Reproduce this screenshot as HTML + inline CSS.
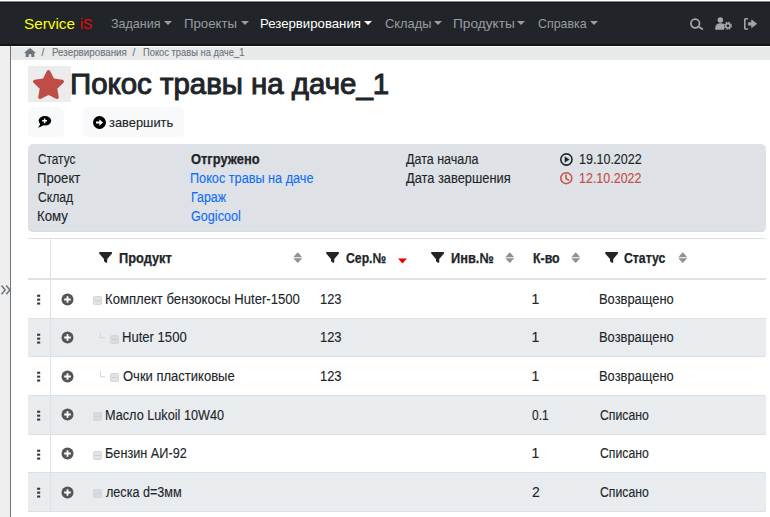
<!DOCTYPE html>
<html><head><meta charset="utf-8">
<style>
*{box-sizing:border-box;margin:0;padding:0}
html,body{width:770px;height:517px;overflow:hidden;background:#fff;font-family:"Liberation Sans",sans-serif;color:#212529;position:relative}
.a{position:absolute;white-space:nowrap;transform-origin:0 0}
.caret{position:absolute;width:0;height:0;border-left:4px solid transparent;border-right:4px solid transparent;border-top:4px solid #9a9c9f}
.hline{position:absolute;left:28px;width:738px;background:#dee2e6}
.stripe{position:absolute;left:28px;width:738px;height:38.6px;background:#e9ecef}
</style></head><body>
<div class="a" style="left:0;top:0;width:770px;height:1px;background:#fff"></div>
<div class="a" style="left:0;top:1px;width:770px;height:1px;background:#8a8c8e"></div>
<div class="a" style="left:0;top:2px;width:770px;height:1px;background:#15181b"></div>
<div class="a" style="left:0;top:3px;width:770px;height:40.5px;background:#212529"></div>
<div class="a" style="left:0;top:43.5px;width:770px;height:2px;background:#121416"></div>
<i class="caret" style="left:164px;top:21px;border-top-color:#9a9c9f"></i>
<i class="caret" style="left:241px;top:21px;border-top-color:#9a9c9f"></i>
<i class="caret" style="left:364px;top:21px;border-top-color:#fff"></i>
<i class="caret" style="left:434px;top:21px;border-top-color:#9a9c9f"></i>
<i class="caret" style="left:517px;top:21px;border-top-color:#9a9c9f"></i>
<i class="caret" style="left:590px;top:21px;border-top-color:#9a9c9f"></i>
<svg class="a" style="left:689px;top:17px" width="16" height="14" viewBox="0 0 16 14"><circle cx="6.2" cy="6.5" r="4.3" fill="none" stroke="#a4a6a8" stroke-width="1.75"/><path d="M9.5 9.8 L13.3 12" stroke="#a4a6a8" stroke-width="1.8" stroke-linecap="round"/></svg>
<svg class="a" style="left:715px;top:17px" width="18" height="14" viewBox="0 0 18 14"><circle cx="5.3" cy="3" r="2.75" fill="#a4a6a8"/><path d="M0.2 12.7 V11.5 C0.2 8.3 1.8 6.2 4.8 6.2 H6 C7.6 6.2 8.6 6.8 9.1 7.6 V12.7 Z" fill="#a4a6a8"/><circle cx="12.9" cy="8.8" r="3.4" fill="none" stroke="#a4a6a8" stroke-width="1.3" stroke-dasharray="1.6 1.07"/><circle cx="12.9" cy="8.8" r="2.2" fill="none" stroke="#a4a6a8" stroke-width="1.6"/></svg>
<svg class="a" style="left:743px;top:17px" width="15" height="14" viewBox="0 0 15 14"><path d="M4.9 1.8 H2.6 Q1.8 1.8 1.8 2.6 V11.2 Q1.8 12 2.6 12 H4.9" fill="none" stroke="#a4a6a8" stroke-width="1.6"/><path d="M5.4 5.4 H8.6 V2.8 L13.8 6.8 L8.6 10.8 V8.2 H5.4 Z" fill="#a4a6a8" stroke="#a4a6a8" stroke-width="0.6" stroke-linejoin="round"/></svg>
<div class="a" style="left:0;top:45.5px;width:10px;height:472px;background:#efefef"></div>
<div class="a" style="left:10px;top:45.5px;width:1px;height:472px;background:#6c757d"></div>
<svg class="a" style="left:0px;top:285px" width="11" height="10" viewBox="0 0 11 10"><path d="M1.5 0.6 L5.2 4.95 L1.5 9.3 M6.2 0.6 L9.9 4.95 L6.2 9.3" fill="none" stroke="#6c757d" stroke-width="1.5"/></svg>
<div class="a" style="left:11px;top:45.5px;width:759px;height:1.5px;background:#fff"></div>
<div class="a" style="left:11px;top:47px;width:759px;height:12.5px;background:#e8e9e9"></div>
<svg class="a" style="left:24px;top:48px" width="12" height="9" viewBox="0 0 12 9"><path d="M6 0 L12 5 H10.3 V9 H7.3 V6.2 H4.7 V9 H1.7 V5 H0 Z" fill="#6c757d"/></svg>
<div class="a" style="left:28px;top:66px;width:42.5px;height:36.3px;background:#ececec"></div>
<svg class="a" style="left:33.3px;top:69.8px" width="31" height="29" viewBox="20 0 536 512" preserveAspectRatio="none"><path d="M259.3 17.8L194 150.2 47.9 171.5c-26.2 3.8-36.7 36.1-17.7 54.6l105.7 103-25 145.5c-4.5 26.3 23.2 46 46.4 33.7L288 439.6l130.7 68.7c23.2 12.2 50.9-7.4 46.4-33.7l-25-145.5 105.7-103c19-18.5 8.5-50.8-17.7-54.6L382 150.2 316.7 17.8c-11.7-23.6-45.6-23.9-57.4 0z" fill="#c04c48"/></svg>
<div class="a" style="left:27.7px;top:106.8px;width:36.3px;height:30.3px;background:#f8f9fa;border-radius:5px"></div>
<svg class="a" style="left:37px;top:115px" width="15" height="13" viewBox="0 0 15 13"><ellipse cx="7.9" cy="5.8" rx="6.3" ry="4.75" fill="#000"/><path d="M3.2 8.5 C3 10 2.2 11.5 0.6 12.5 C3 12.3 4.8 11.3 6.2 10.2 Z" fill="#000"/><path d="M7.6 3.4 V8.2 M5.2 5.8 H10" stroke="#fff" stroke-width="1.5"/></svg>
<div class="a" style="left:83px;top:106.8px;width:101px;height:30.3px;background:#f8f9fa;border-radius:5px"></div>
<svg class="a" style="left:93px;top:116px" width="13" height="13" viewBox="0 0 13 13"><circle cx="6.5" cy="6.5" r="6.5" fill="#000"/><path d="M3 5.6 H6.3 V3.3 L10 6.5 L6.3 9.7 V7.4 H3 Z" fill="#fff"/></svg>
<div class="a" style="left:27.8px;top:143.6px;width:738px;height:88px;background:#dee2e6;border-radius:5px;box-shadow:inset 0 -1.5px 0 #d9dde1"></div>
<svg class="a" style="left:559px;top:152px" width="15" height="15" viewBox="0 0 15 15"><circle cx="7.4" cy="7.5" r="5.6" fill="none" stroke="#212529" stroke-width="1.6"/><path d="M5.9 4.7 L10.3 7.5 L5.9 10.3 Z" fill="#212529" stroke="#212529" stroke-width="0.4" stroke-linejoin="round"/></svg>
<svg class="a" style="left:559px;top:171px" width="15" height="15" viewBox="0 0 15 15"><circle cx="7.3" cy="7.2" r="5.5" fill="none" stroke="#c8504b" stroke-width="1.5"/><path d="M7 3.9 V7.5 L9.5 9.2" fill="none" stroke="#c8504b" stroke-width="1.5" stroke-linecap="round"/></svg>
<div class="hline" style="top:238px;height:1px"></div>
<div class="hline" style="top:233.5px;height:1px;background:#fafbfb"></div>
<div class="stripe" style="top:318.00px"></div>
<div class="stripe" style="top:395.20px"></div>
<div class="stripe" style="top:472.40px"></div>
<div class="hline" style="top:277.6px;height:2px"></div>
<div class="hline" style="top:317.80px;height:1px;background:#dde1e5"></div>
<div class="hline" style="top:356.40px;height:1px;background:#dde1e5"></div>
<div class="hline" style="top:395.00px;height:1px;background:#dde1e5"></div>
<div class="hline" style="top:433.60px;height:1px;background:#dde1e5"></div>
<div class="hline" style="top:472.20px;height:1px;background:#dde1e5"></div>
<div class="hline" style="top:510.80px;height:1px;background:#dde1e5"></div>
<div class="a" style="left:50px;top:239px;width:1px;height:272px;background:#dee2e6"></div>
<svg class="a" style="left:99.2px;top:251.8px" width="13.2" height="10.8" viewBox="0 32 512 448" preserveAspectRatio="none"><path d="M3.9 54.9C10.5 40.9 24.5 32 40 32H472c15.5 0 29.5 8.9 36.1 22.9s4.6 30.5-5.2 42.5L320 320.9V448c0 12.1-6.8 23.2-17.7 28.6s-23.8 4.3-33.5-3L205 423.7c-8.1-6-12.8-15.5-12.8-25.6V320.9L9 97.3C-.7 85.4-2.8 68.8 3.9 54.9z" fill="#212529"/></svg>
<svg class="a" style="left:326.2px;top:251.8px" width="13.2" height="10.8" viewBox="0 32 512 448" preserveAspectRatio="none"><path d="M3.9 54.9C10.5 40.9 24.5 32 40 32H472c15.5 0 29.5 8.9 36.1 22.9s4.6 30.5-5.2 42.5L320 320.9V448c0 12.1-6.8 23.2-17.7 28.6s-23.8 4.3-33.5-3L205 423.7c-8.1-6-12.8-15.5-12.8-25.6V320.9L9 97.3C-.7 85.4-2.8 68.8 3.9 54.9z" fill="#212529"/></svg>
<svg class="a" style="left:431.2px;top:251.8px" width="13.2" height="10.8" viewBox="0 32 512 448" preserveAspectRatio="none"><path d="M3.9 54.9C10.5 40.9 24.5 32 40 32H472c15.5 0 29.5 8.9 36.1 22.9s4.6 30.5-5.2 42.5L320 320.9V448c0 12.1-6.8 23.2-17.7 28.6s-23.8 4.3-33.5-3L205 423.7c-8.1-6-12.8-15.5-12.8-25.6V320.9L9 97.3C-.7 85.4-2.8 68.8 3.9 54.9z" fill="#212529"/></svg>
<svg class="a" style="left:605.2px;top:251.8px" width="13.2" height="10.8" viewBox="0 32 512 448" preserveAspectRatio="none"><path d="M3.9 54.9C10.5 40.9 24.5 32 40 32H472c15.5 0 29.5 8.9 36.1 22.9s4.6 30.5-5.2 42.5L320 320.9V448c0 12.1-6.8 23.2-17.7 28.6s-23.8 4.3-33.5-3L205 423.7c-8.1-6-12.8-15.5-12.8-25.6V320.9L9 97.3C-.7 85.4-2.8 68.8 3.9 54.9z" fill="#212529"/></svg>
<svg class="a" style="left:292.7px;top:252px" width="10" height="12" viewBox="0 0 10 12"><path d="M4.75 0.3 L9 4.9 Q9.2 5.3 8.8 5.3 H0.7 Q0.3 5.3 0.5 4.9 Z M4.75 11 L9 6.6 Q9.2 6.2 8.8 6.2 H0.7 Q0.3 6.2 0.5 6.6 Z" fill="#8e9093"/></svg>
<svg class="a" style="left:504.7px;top:252px" width="10" height="12" viewBox="0 0 10 12"><path d="M4.75 0.3 L9 4.9 Q9.2 5.3 8.8 5.3 H0.7 Q0.3 5.3 0.5 4.9 Z M4.75 11 L9 6.6 Q9.2 6.2 8.8 6.2 H0.7 Q0.3 6.2 0.5 6.6 Z" fill="#8e9093"/></svg>
<svg class="a" style="left:571.2px;top:252px" width="10" height="12" viewBox="0 0 10 12"><path d="M4.75 0.3 L9 4.9 Q9.2 5.3 8.8 5.3 H0.7 Q0.3 5.3 0.5 4.9 Z M4.75 11 L9 6.6 Q9.2 6.2 8.8 6.2 H0.7 Q0.3 6.2 0.5 6.6 Z" fill="#8e9093"/></svg>
<svg class="a" style="left:677.7px;top:252px" width="10" height="12" viewBox="0 0 10 12"><path d="M4.75 0.3 L9 4.9 Q9.2 5.3 8.8 5.3 H0.7 Q0.3 5.3 0.5 4.9 Z M4.75 11 L9 6.6 Q9.2 6.2 8.8 6.2 H0.7 Q0.3 6.2 0.5 6.6 Z" fill="#8e9093"/></svg>
<svg class="a" style="left:398px;top:258px" width="9" height="6" viewBox="0 0 9 6"><path d="M0 0.5 H9 L4.5 5.5 Z" fill="#e00"/></svg>
<svg class="a" style="left:37px;top:294.1px" width="4" height="11" viewBox="0 0 4 11"><rect x="0.1" y="0.7" width="3.1" height="2.1" fill="#3a3a3a"/><rect x="0.1" y="4.6" width="3.1" height="2.1" fill="#3a3a3a"/><rect x="0.1" y="8.5" width="3.1" height="2.1" fill="#3a3a3a"/></svg>
<svg class="a" style="left:61px;top:292.6px" width="13" height="13" viewBox="0 0 13 13"><circle cx="6.5" cy="6.5" r="6" fill="#555"/><path d="M6.5 3.2 V9.8 M3.2 6.5 H9.8" stroke="#fff" stroke-width="1.8"/></svg>
<svg class="a" style="left:93px;top:296.2px" width="9" height="9" viewBox="0 0 9 9"><rect x="0.5" y="0.5" width="8" height="8" rx="1.2" fill="#e3e3e3" stroke="#d5d5d5"/><path d="M2 4.5 H7" stroke="#cccccc" stroke-width="1"/></svg>
<svg class="a" style="left:37px;top:332.7px" width="4" height="11" viewBox="0 0 4 11"><rect x="0.1" y="0.7" width="3.1" height="2.1" fill="#3a3a3a"/><rect x="0.1" y="4.6" width="3.1" height="2.1" fill="#3a3a3a"/><rect x="0.1" y="8.5" width="3.1" height="2.1" fill="#3a3a3a"/></svg>
<svg class="a" style="left:61px;top:331.2px" width="13" height="13" viewBox="0 0 13 13"><circle cx="6.5" cy="6.5" r="6" fill="#555"/><path d="M6.5 3.2 V9.8 M3.2 6.5 H9.8" stroke="#fff" stroke-width="1.8"/></svg>
<svg class="a" style="left:99px;top:332.3px" width="7" height="7" viewBox="0 0 7 7"><path d="M1.4 0 V5.8 H6.4" fill="none" stroke="#d4d6d8" stroke-width="1"/></svg>
<svg class="a" style="left:110px;top:334.8px" width="9" height="9" viewBox="0 0 9 9"><rect x="0.5" y="0.5" width="8" height="8" rx="1.2" fill="#d8dadc" stroke="#d5d7d9"/><path d="M2 4.5 H7" stroke="#cdd0d2" stroke-width="1"/></svg>
<svg class="a" style="left:37px;top:371.3px" width="4" height="11" viewBox="0 0 4 11"><rect x="0.1" y="0.7" width="3.1" height="2.1" fill="#3a3a3a"/><rect x="0.1" y="4.6" width="3.1" height="2.1" fill="#3a3a3a"/><rect x="0.1" y="8.5" width="3.1" height="2.1" fill="#3a3a3a"/></svg>
<svg class="a" style="left:61px;top:369.8px" width="13" height="13" viewBox="0 0 13 13"><circle cx="6.5" cy="6.5" r="6" fill="#555"/><path d="M6.5 3.2 V9.8 M3.2 6.5 H9.8" stroke="#fff" stroke-width="1.8"/></svg>
<svg class="a" style="left:99px;top:370.9px" width="7" height="7" viewBox="0 0 7 7"><path d="M1.4 0 V5.8 H6.4" fill="none" stroke="#d4d6d8" stroke-width="1"/></svg>
<svg class="a" style="left:110px;top:373.4px" width="9" height="9" viewBox="0 0 9 9"><rect x="0.5" y="0.5" width="8" height="8" rx="1.2" fill="#e3e3e3" stroke="#d5d5d5"/><path d="M2 4.5 H7" stroke="#cccccc" stroke-width="1"/></svg>
<svg class="a" style="left:37px;top:409.9px" width="4" height="11" viewBox="0 0 4 11"><rect x="0.1" y="0.7" width="3.1" height="2.1" fill="#3a3a3a"/><rect x="0.1" y="4.6" width="3.1" height="2.1" fill="#3a3a3a"/><rect x="0.1" y="8.5" width="3.1" height="2.1" fill="#3a3a3a"/></svg>
<svg class="a" style="left:61px;top:408.4px" width="13" height="13" viewBox="0 0 13 13"><circle cx="6.5" cy="6.5" r="6" fill="#555"/><path d="M6.5 3.2 V9.8 M3.2 6.5 H9.8" stroke="#fff" stroke-width="1.8"/></svg>
<svg class="a" style="left:93px;top:412.0px" width="9" height="9" viewBox="0 0 9 9"><rect x="0.5" y="0.5" width="8" height="8" rx="1.2" fill="#d8dadc" stroke="#d5d7d9"/><path d="M2 4.5 H7" stroke="#cdd0d2" stroke-width="1"/></svg>
<svg class="a" style="left:37px;top:448.5px" width="4" height="11" viewBox="0 0 4 11"><rect x="0.1" y="0.7" width="3.1" height="2.1" fill="#3a3a3a"/><rect x="0.1" y="4.6" width="3.1" height="2.1" fill="#3a3a3a"/><rect x="0.1" y="8.5" width="3.1" height="2.1" fill="#3a3a3a"/></svg>
<svg class="a" style="left:61px;top:447.0px" width="13" height="13" viewBox="0 0 13 13"><circle cx="6.5" cy="6.5" r="6" fill="#555"/><path d="M6.5 3.2 V9.8 M3.2 6.5 H9.8" stroke="#fff" stroke-width="1.8"/></svg>
<svg class="a" style="left:93px;top:450.6px" width="9" height="9" viewBox="0 0 9 9"><rect x="0.5" y="0.5" width="8" height="8" rx="1.2" fill="#e3e3e3" stroke="#d5d5d5"/><path d="M2 4.5 H7" stroke="#cccccc" stroke-width="1"/></svg>
<svg class="a" style="left:37px;top:487.1px" width="4" height="11" viewBox="0 0 4 11"><rect x="0.1" y="0.7" width="3.1" height="2.1" fill="#3a3a3a"/><rect x="0.1" y="4.6" width="3.1" height="2.1" fill="#3a3a3a"/><rect x="0.1" y="8.5" width="3.1" height="2.1" fill="#3a3a3a"/></svg>
<svg class="a" style="left:61px;top:485.6px" width="13" height="13" viewBox="0 0 13 13"><circle cx="6.5" cy="6.5" r="6" fill="#555"/><path d="M6.5 3.2 V9.8 M3.2 6.5 H9.8" stroke="#fff" stroke-width="1.8"/></svg>
<svg class="a" style="left:93px;top:489.2px" width="9" height="9" viewBox="0 0 9 9"><rect x="0.5" y="0.5" width="8" height="8" rx="1.2" fill="#d8dadc" stroke="#d5d7d9"/><path d="M2 4.5 H7" stroke="#cdd0d2" stroke-width="1"/></svg>
<div class="a" style="left:24.08px;top:14.20px;font-size:15px;line-height:19px;color:#ffff00;transform:scaleX(1.0204)">Service</div>
<div class="a" style="left:79.89px;top:14.20px;font-size:15px;line-height:19px;color:#ff0000;transform:scaleX(0.9083)">iS</div>
<div class="a" style="left:111.40px;top:15.00px;font-size:13.5px;line-height:17px;color:#9a9c9f;transform:scaleX(0.9264)">Задания</div>
<div class="a" style="left:184.22px;top:15.00px;font-size:13.5px;line-height:17px;color:#9a9c9f;transform:scaleX(0.9792)">Проекты</div>
<div class="a" style="left:259.92px;top:15.00px;font-size:13.5px;line-height:17px;color:#ffffff;transform:scaleX(0.9775)">Резервирования</div>
<div class="a" style="left:384.60px;top:15.00px;font-size:13.5px;line-height:17px;color:#9a9c9f;transform:scaleX(0.9521)">Склады</div>
<div class="a" style="left:453.19px;top:15.00px;font-size:13.5px;line-height:17px;color:#9a9c9f;transform:scaleX(1.0119)">Продукты</div>
<div class="a" style="left:537.80px;top:15.00px;font-size:13.5px;line-height:17px;color:#9a9c9f;transform:scaleX(0.9189)">Справка</div>
<div class="a" style="left:41.50px;top:47.30px;font-size:10px;line-height:12px;color:#6c757d;-webkit-text-stroke:0.12px #6c757d">/</div>
<div class="a" style="left:51.60px;top:47.30px;font-size:10px;line-height:12px;color:#6c757d;transform:scaleX(0.9789);-webkit-text-stroke:0.12px #6c757d">Резервирования</div>
<div class="a" style="left:132.60px;top:47.30px;font-size:10px;line-height:12px;color:#6c757d;-webkit-text-stroke:0.12px #6c757d">/</div>
<div class="a" style="left:142.70px;top:47.30px;font-size:10px;line-height:12px;color:#6c757d;transform:scaleX(0.9339);-webkit-text-stroke:0.12px #6c757d">Покос травы на даче_1</div>
<div class="a" style="left:70.47px;top:66.30px;font-size:29px;line-height:36px;color:#212529;transform:scaleX(1.0144);-webkit-text-stroke:1.0px #212529">Покос травы на даче_1</div>
<div class="a" style="left:109.40px;top:113.60px;font-size:13.5px;line-height:17px;color:#212529;transform:scaleX(0.9537);-webkit-text-stroke:0.12px #212529">завершить</div>
<div class="a" style="left:37.70px;top:149.80px;font-size:14px;line-height:18px;color:#212529;transform:scaleX(0.8432);-webkit-text-stroke:0.12px #212529">Статус</div>
<div class="a" style="left:36.76px;top:168.70px;font-size:14px;line-height:18px;color:#212529;transform:scaleX(0.9400);-webkit-text-stroke:0.12px #212529">Проект</div>
<div class="a" style="left:37.70px;top:187.60px;font-size:14px;line-height:18px;color:#212529;transform:scaleX(0.8683);-webkit-text-stroke:0.12px #212529">Склад</div>
<div class="a" style="left:36.75px;top:206.50px;font-size:14px;line-height:18px;color:#212529;transform:scaleX(0.9469);-webkit-text-stroke:0.12px #212529">Кому</div>
<div class="a" style="left:191.40px;top:149.80px;font-size:14px;line-height:18px;color:#212529;font-weight:bold;transform:scaleX(0.9213);-webkit-text-stroke:0.25px #212529">Отгружено</div>
<div class="a" style="left:190.49px;top:168.70px;font-size:14px;line-height:18px;color:#0d6efd;transform:scaleX(0.9059);-webkit-text-stroke:0.12px #0d6efd">Покос травы на даче</div>
<div class="a" style="left:190.51px;top:187.60px;font-size:14px;line-height:18px;color:#0d6efd;transform:scaleX(0.8872);-webkit-text-stroke:0.12px #0d6efd">Гараж</div>
<div class="a" style="left:191.40px;top:206.50px;font-size:14px;line-height:18px;color:#0d6efd;transform:scaleX(0.9018);-webkit-text-stroke:0.12px #0d6efd">Gogicool</div>
<div class="a" style="left:406.00px;top:149.80px;font-size:14px;line-height:18px;color:#212529;transform:scaleX(0.8938);-webkit-text-stroke:0.12px #212529">Дата начала</div>
<div class="a" style="left:406.00px;top:168.70px;font-size:14px;line-height:18px;color:#212529;transform:scaleX(0.9167);-webkit-text-stroke:0.12px #212529">Дата завершения</div>
<div class="a" style="left:579.10px;top:149.80px;font-size:14px;line-height:18px;color:#212529;transform:scaleX(0.8957);-webkit-text-stroke:0.12px #212529">19.10.2022</div>
<div class="a" style="left:579.41px;top:168.70px;font-size:14px;line-height:18px;color:#c64d48;transform:scaleX(0.8913);-webkit-text-stroke:0.12px #c64d48">12.10.2022</div>
<div class="a" style="left:119.00px;top:249.00px;font-size:14px;line-height:18px;color:#212529;font-weight:bold;transform:scaleX(0.9155);-webkit-text-stroke:0.25px #212529">Продукт</div>
<div class="a" style="left:346.00px;top:249.00px;font-size:14px;line-height:18px;color:#212529;font-weight:bold;transform:scaleX(0.8739);-webkit-text-stroke:0.25px #212529">Сер.№</div>
<div class="a" style="left:450.60px;top:249.00px;font-size:14px;line-height:18px;color:#212529;font-weight:bold;transform:scaleX(0.9152);-webkit-text-stroke:0.25px #212529">Инв.№</div>
<div class="a" style="left:532.50px;top:249.00px;font-size:14px;line-height:18px;color:#212529;font-weight:bold;transform:scaleX(0.8833);-webkit-text-stroke:0.25px #212529">К-во</div>
<div class="a" style="left:624.40px;top:249.00px;font-size:14px;line-height:18px;color:#212529;font-weight:bold;transform:scaleX(0.8745);-webkit-text-stroke:0.25px #212529">Статус</div>
<div class="a" style="left:105.36px;top:289.70px;font-size:14px;line-height:18px;color:#212529;transform:scaleX(0.9362);-webkit-text-stroke:0.12px #212529">Комплект бензокосы Huter-1500</div>
<div class="a" style="left:320.48px;top:289.70px;font-size:14px;line-height:18px;color:#212529;transform:scaleX(0.9227);-webkit-text-stroke:0.12px #212529">123</div>
<div class="a" style="left:531.60px;top:289.70px;font-size:14px;line-height:18px;color:#212529;-webkit-text-stroke:0.12px #212529">1</div>
<div class="a" style="left:598.58px;top:289.70px;font-size:14px;line-height:18px;color:#212529;transform:scaleX(0.9213);-webkit-text-stroke:0.12px #212529">Возвращено</div>
<div class="a" style="left:121.87px;top:328.30px;font-size:14px;line-height:18px;color:#212529;transform:scaleX(0.9338);-webkit-text-stroke:0.12px #212529">Huter 1500</div>
<div class="a" style="left:320.48px;top:328.30px;font-size:14px;line-height:18px;color:#212529;transform:scaleX(0.9227);-webkit-text-stroke:0.12px #212529">123</div>
<div class="a" style="left:531.60px;top:328.30px;font-size:14px;line-height:18px;color:#212529;-webkit-text-stroke:0.12px #212529">1</div>
<div class="a" style="left:598.58px;top:328.30px;font-size:14px;line-height:18px;color:#212529;transform:scaleX(0.9213);-webkit-text-stroke:0.12px #212529">Возвращено</div>
<div class="a" style="left:122.80px;top:366.90px;font-size:14px;line-height:18px;color:#212529;transform:scaleX(0.9292);-webkit-text-stroke:0.12px #212529">Очки пластиковые</div>
<div class="a" style="left:320.48px;top:366.90px;font-size:14px;line-height:18px;color:#212529;transform:scaleX(0.9227);-webkit-text-stroke:0.12px #212529">123</div>
<div class="a" style="left:531.60px;top:366.90px;font-size:14px;line-height:18px;color:#212529;-webkit-text-stroke:0.12px #212529">1</div>
<div class="a" style="left:598.58px;top:366.90px;font-size:14px;line-height:18px;color:#212529;transform:scaleX(0.9213);-webkit-text-stroke:0.12px #212529">Возвращено</div>
<div class="a" style="left:105.39px;top:405.50px;font-size:14px;line-height:18px;color:#212529;transform:scaleX(0.9062);-webkit-text-stroke:0.12px #212529">Масло Lukoil 10W40</div>
<div class="a" style="left:532.00px;top:405.50px;font-size:14px;line-height:18px;color:#212529;transform:scaleX(0.8526);-webkit-text-stroke:0.12px #212529">0.1</div>
<div class="a" style="left:599.50px;top:405.50px;font-size:14px;line-height:18px;color:#212529;transform:scaleX(0.8750);-webkit-text-stroke:0.12px #212529">Списано</div>
<div class="a" style="left:105.39px;top:444.10px;font-size:14px;line-height:18px;color:#212529;transform:scaleX(0.9067);-webkit-text-stroke:0.12px #212529">Бензин АИ-92</div>
<div class="a" style="left:531.60px;top:444.10px;font-size:14px;line-height:18px;color:#212529;-webkit-text-stroke:0.12px #212529">1</div>
<div class="a" style="left:599.50px;top:444.10px;font-size:14px;line-height:18px;color:#212529;transform:scaleX(0.8750);-webkit-text-stroke:0.12px #212529">Списано</div>
<div class="a" style="left:106.30px;top:482.70px;font-size:14px;line-height:18px;color:#212529;transform:scaleX(0.9000);-webkit-text-stroke:0.12px #212529">леска d=3мм</div>
<div class="a" style="left:532.00px;top:482.70px;font-size:14px;line-height:18px;color:#212529;-webkit-text-stroke:0.12px #212529">2</div>
<div class="a" style="left:599.50px;top:482.70px;font-size:14px;line-height:18px;color:#212529;transform:scaleX(0.8750);-webkit-text-stroke:0.12px #212529">Списано</div>
</body></html>
